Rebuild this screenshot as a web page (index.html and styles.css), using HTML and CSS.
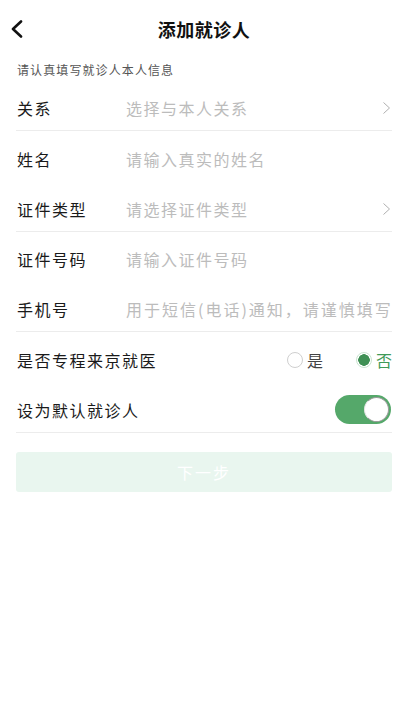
FILE: index.html
```html
<!DOCTYPE html>
<html lang="zh-CN">
<head>
<meta charset="utf-8">
<title>添加就诊人</title>
<link rel="stylesheet" href="styles.css">
</head>
<body>
<div class="page">
  <header class="header">
    <svg class="back" width="14" height="18" viewBox="0 0 14 18"><polyline points="11,1.5 3,9 11,16.5" fill="none" stroke="#111" stroke-width="2.6" stroke-linecap="round" stroke-linejoin="round"/></svg>
    <h1 class="title">添加就诊人</h1>
  </header>
  <div class="tip">请认真填写就诊人本人信息</div>
  <div class="form">
    <div class="row line">
      <span class="label">关系</span>
      <span class="ph">选择与本人关系</span>
      <svg class="chev" width="9" height="14" viewBox="0 0 9 14"><polyline points="1.5,1.5 7.5,7 1.5,12.5" fill="none" stroke="#b0b0b0" stroke-width="1"/></svg>
    </div>
    <div class="row">
      <span class="label">姓名</span>
      <span class="ph">请输入真实的姓名</span>
    </div>
    <div class="row line">
      <span class="label">证件类型</span>
      <span class="ph">请选择证件类型</span>
      <svg class="chev" width="9" height="14" viewBox="0 0 9 14"><polyline points="1.5,1.5 7.5,7 1.5,12.5" fill="none" stroke="#b0b0b0" stroke-width="1"/></svg>
    </div>
    <div class="row">
      <span class="label">证件号码</span>
      <span class="ph">请输入证件号码</span>
    </div>
    <div class="row line">
      <span class="label">手机号</span>
      <span class="ph wide">用于短信(电话)通知，请谨慎填写</span>
    </div>
    <div class="row">
      <span class="label">是否专程来京就医</span>
      <div class="radios">
        <span class="radio"><span class="dot"></span>是</span>
        <span class="radio on"><span class="dot"></span>否</span>
      </div>
    </div>
    <div class="row line">
      <span class="label">设为默认就诊人</span>
      <span class="switch"><span class="knob"></span></span>
    </div>
  </div>
  <button class="next">下一步</button>
</div>
</body>
</html>
```
FILE: styles.css
```css
* { box-sizing: border-box; }
html, body { margin: 0; padding: 0; background: #fff; }
body { font-family: "Noto Sans CJK SC", "Noto Sans", sans-serif; color: #111; }
.page { width: 408px; padding: 0 16px; }
.header { height: 58px; display: flex; align-items: center; justify-content: center; position: relative; }
.back { position: absolute; left: -6px; top: 20px; }
.title { margin: 0; font-size: 18px; font-weight: 700; letter-spacing: 0.5px; line-height: 1; }
.tip { height: 22.7px; display: flex; align-items: center; padding-left: 1px; font-size: 12px; letter-spacing: 1.1px; color: #555; }
.form { display: flex; flex-direction: column; }
.row { height: 50.35px; display: flex; align-items: center; padding-top: 5px; padding-left: 1px; }
.row.line { border-bottom: 1px solid #ececec; }
.label { width: 109px; font-size: 16px; letter-spacing: 1.5px; color: #1a1a1a; white-space: nowrap; flex: none; }
.ph { flex: 1; font-size: 16px; letter-spacing: 1.5px; color: #bcbcbc; white-space: nowrap; }
.ph.wide { letter-spacing: 2px; }
.chev { flex: none; margin-right: 1px; }
.radios { margin-left: auto; display: flex; gap: 33px; }
.radio { display: flex; align-items: center; gap: 4px; font-size: 16px; color: #444; }
.dot { width: 16px; height: 16px; border-radius: 50%; border: 1px solid #cfcfcf; }
.radio.on { color: #3f9a58; }
.radio.on .dot { border: 1.5px solid #c9e4d0; background: radial-gradient(circle, #3f9055 0 5.5px, #fff 6px); }
.switch { margin-left: auto; width: 56px; height: 29px; border-radius: 15px; background: #55a86a; position: relative; margin-right: 1px; }
.knob { position: absolute; right: 2px; top: 2px; width: 25px; height: 25px; border-radius: 50%; background: #fff; border: 1px solid #9a9a9a; border-left-color: #e5e5e5; }
.next { display: block; width: 100%; height: 40px; margin-top: 19px; border: none; border-radius: 3px; background: #e9f6ef; color: #fff; font-family: "Noto Sans CJK SC", sans-serif; font-size: 16px; letter-spacing: 2px; }
```
